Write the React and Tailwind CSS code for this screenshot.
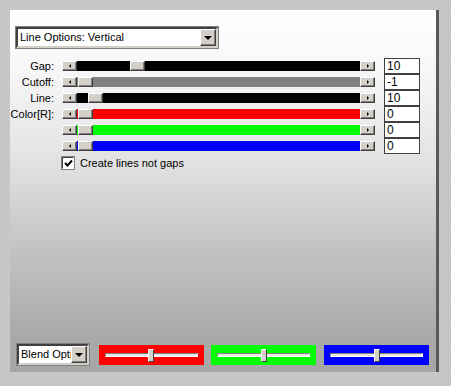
import React from "react";

const font = { fontFamily: '"Liberation Sans", Arial, sans-serif' };

// 3D raised little button used on scrollbars and combo boxes
function Bevel({ className = "", children }) {
  return (
    <div
      className={[
        "flex items-center justify-center bg-[#d4d0c8] border-t border-l border-t-white border-l-white border-b border-r border-b-[#404040] border-r-[#404040] shadow-[inset_-1px_-1px_0_#808080]",
        className,
      ].join(" ")}
    >
      {children}
    </div>
  );
}

function Arrow({ dir }) {
  return dir === "left" ? (
    <div className="w-0 h-0 border-y-[2px] border-y-transparent border-r-[2px] border-r-black" />
  ) : dir === "right" ? (
    <div className="w-0 h-0 border-y-[2px] border-y-transparent border-l-[2px] border-l-black" />
  ) : (
    <div className="w-0 h-0 border-x-[4px] border-x-transparent border-t-[4px] border-t-black" />
  );
}

function Combo({ text, width, className = "" }) {
  return (
    <div
      className={[
        "flex items-center h-[21px] bg-white border-2 border-t-[#404040] border-l-[#404040] border-b-[#d4d0c8] border-r-[#d4d0c8] outline outline-1 outline-[#808080]",
        className,
      ].join(" ")}
      style={{ width }}
    >
      <span className="flex-1 overflow-hidden whitespace-nowrap pl-[2px] text-[11px] leading-none text-black">
        {text}
      </span>
      <Bevel className="w-[16px] h-[17px] shrink-0">
        <Arrow dir="down" />
      </Bevel>
    </div>
  );
}

function Row({ label, color, thumb, value }) {
  return (
    <div className="flex items-center h-[16px]">
      <div className="w-[44px] text-right text-[11px] leading-none text-black">{label}</div>
      <div className="ml-[8px] flex items-center">
        <div className="flex items-center h-[10px] w-[313px]">
          <Bevel className="w-[15px] h-[10px]">
            <Arrow dir="left" />
          </Bevel>
          <div className="flex-1 h-[10px] flex" style={{ background: color }}>
            <div className="h-[10px]" style={{ width: thumb }} />
            <Bevel className="w-[15px] h-[10px]">
              <span />
            </Bevel>
          </div>
          <Bevel className="w-[15px] h-[10px]">
            <Arrow dir="right" />
          </Bevel>
        </div>
      </div>
      <div className="ml-[9px] w-[36px] h-[16px] bg-white border border-[#404040] flex items-center pl-[2px] text-[12px] leading-none text-black">
        {value}
      </div>
    </div>
  );
}

function MiniSlider({ bg, thumb }) {
  return (
    <div className={`w-[105px] h-[20px] flex flex-col justify-center px-[6px] ${bg}`}>
      <div className="relative h-[4px] border-t border-l border-[#808080] border-b border-r border-b-white border-r-white bg-[#e8e8e8]">
        <div
          className="absolute top-[-5px] w-[6px] h-[13px] bg-[#d4d0c8] border border-t-white border-l-white border-b-[#404040] border-r-[#404040]"
          style={{ left: thumb }}
        />
      </div>
    </div>
  );
}

export default function App() {
  return (
    <div
      className="w-[451px] h-[386px] pt-[10px] pl-[10px] bg-[#c7c7c7] bg-[radial-gradient(#bdbdbd_0.6px,transparent_0.7px)] bg-[length:3px_3px]"
      style={font}
    >
      <div className="w-[429px] h-[362px] border-r-[3px] border-r-[#5a5a5a] bg-[linear-gradient(to_bottom,#ffffff_0%,#f6f6f6_18%,#e2e2e2_42%,#c4c4c4_65%,#a9a9a9_90%,#a6a6a6_100%)] flex flex-col">
        <div className="pt-[17px] pl-[6px]">
          <Combo text="Line Options: Vertical" width={202} />
        </div>

        <div className="mt-[10px] flex flex-col">
          <Row label="Gap:" color="#000000" thumb={53} value="10" />
          <Row label="Cutoff:" color="#808080" thumb={1} value="-1" />
          <Row label="Line:" color="#000000" thumb={11} value="10" />
          <Row label="Color[R]:" color="#ff0000" thumb={1} value="0" />
          <Row label="" color="#00ff00" thumb={1} value="0" />
          <Row label="" color="#0000ff" thumb={1} value="0" />
        </div>

        <div className="mt-[3px] ml-[52px] flex items-center gap-[6px]">
          <div className="w-[12px] h-[12px] bg-white border border-t-[#404040] border-l-[#404040] border-b-white border-r-white outline outline-1 outline-[#808080] flex items-center justify-center">
            <svg width="9" height="9" viewBox="0 0 9 9">
              <path d="M1 4 L3.5 6.5 L8 1.5" stroke="black" strokeWidth="2" fill="none" />
            </svg>
          </div>
          <span className="text-[11px] leading-none text-black">Create lines not gaps</span>
        </div>

        <div className="mt-auto mb-[7px] ml-[7px] flex items-center">
          <Combo text="Blend Options" width={72} />
          <div className="ml-[10px] flex items-center gap-[7px]">
            <MiniSlider bg="bg-[#ff0000]" thumb={42} />
            <MiniSlider bg="bg-[#00ff00]" thumb={43} />
            <div className="ml-[1px]">
              <MiniSlider bg="bg-[#0000ff]" thumb={43} />
            </div>
          </div>
        </div>
      </div>
    </div>
  );
}
